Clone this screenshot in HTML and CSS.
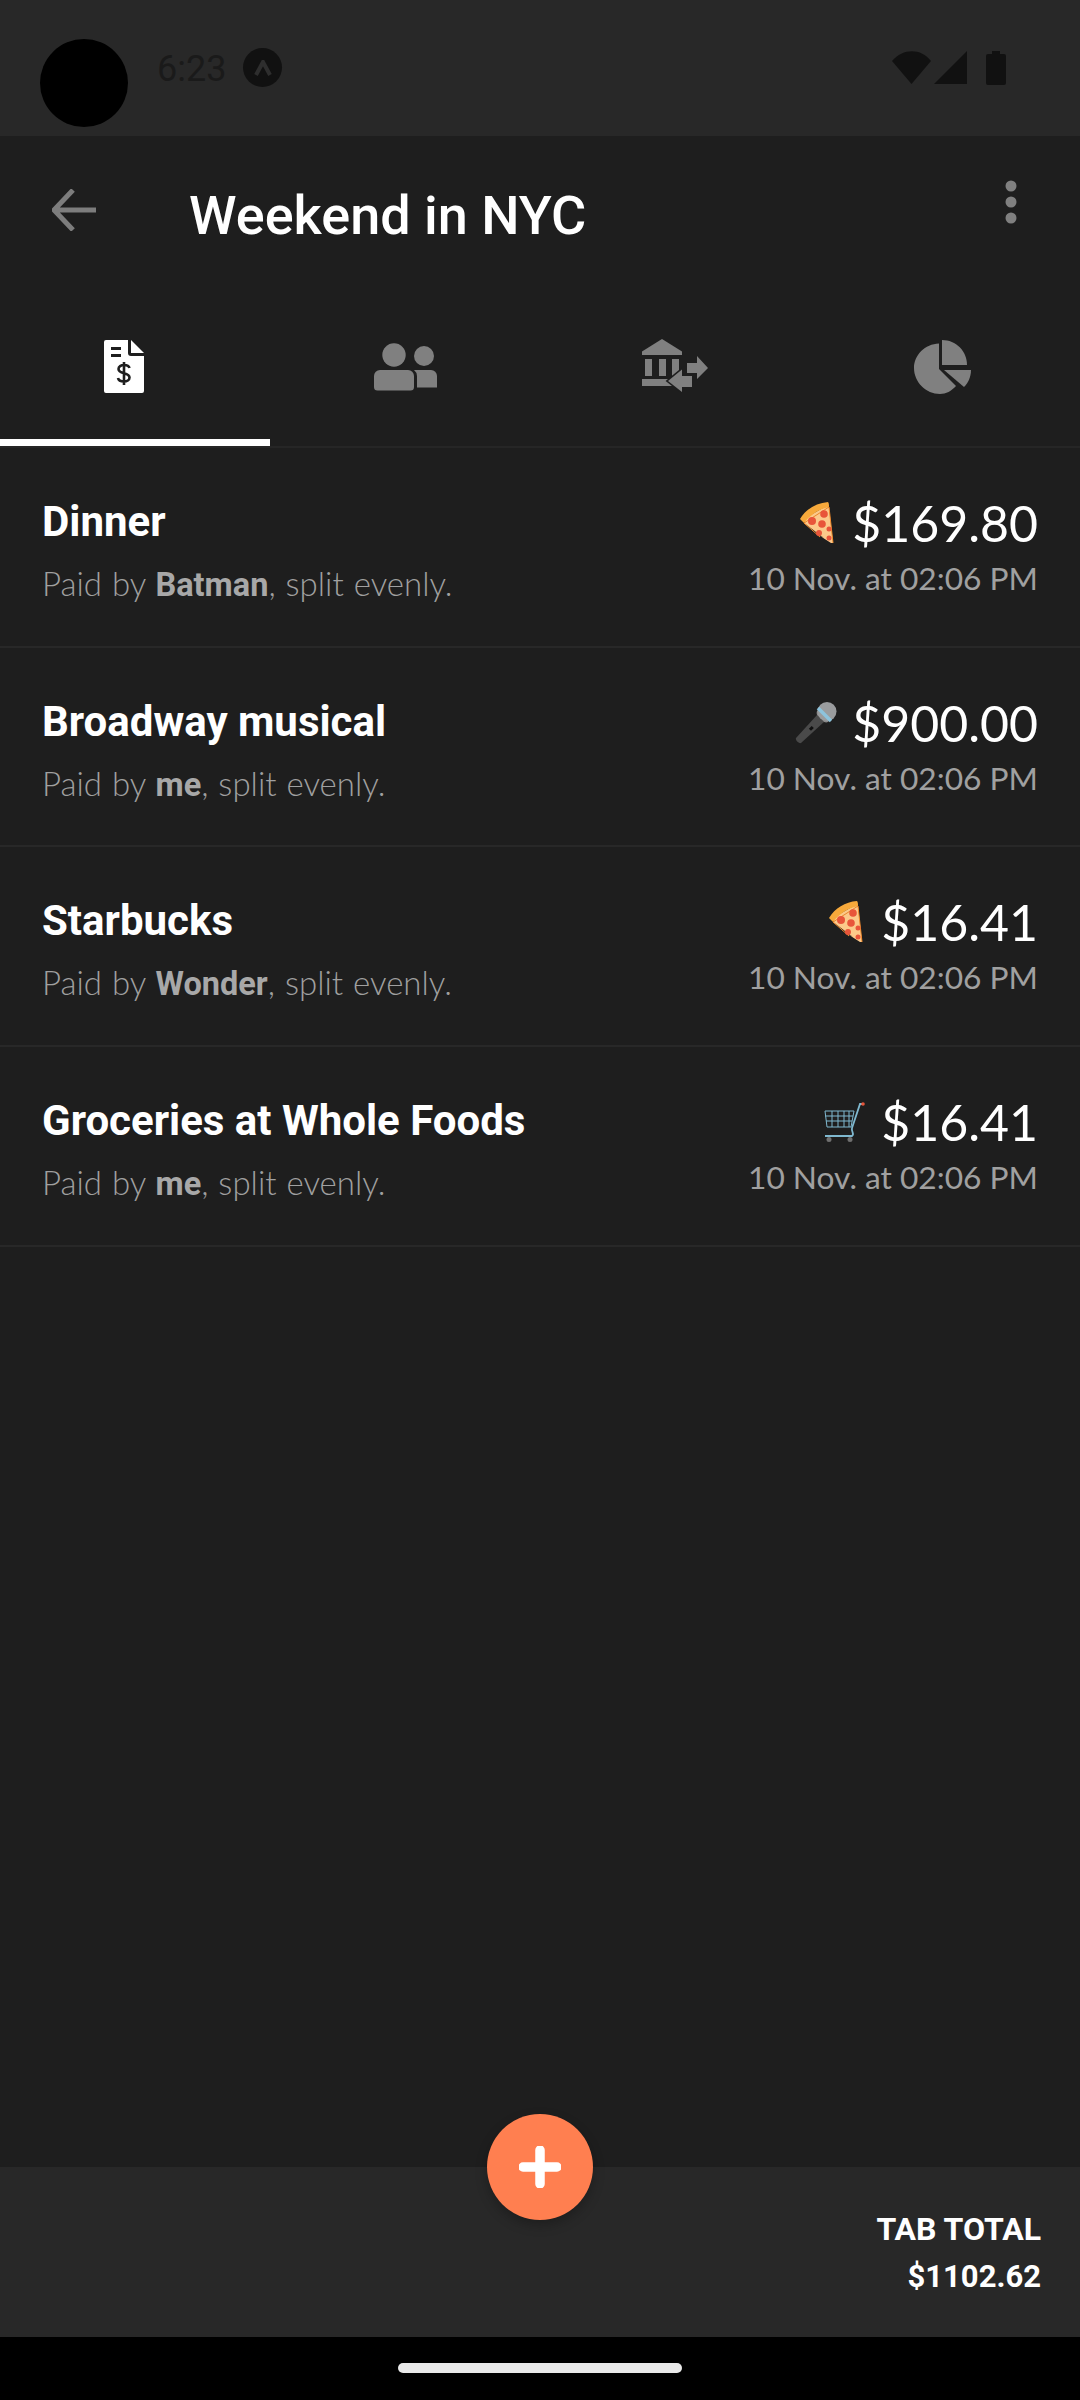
FILE: index.html
```html
<!DOCTYPE html>
<html lang="en">
<head>
    <meta charset="UTF-8">
    <meta name="viewport" content="width=device-width, initial-scale=1.0">
    <title>Weekend in NYC</title>
    <link rel="stylesheet" href="styles.css">
</head>
<body>
    <div class="app">
        <div class="camera"></div>

        <div class="status-bar">
            <span class="time">6:23</span>
            <span class="badge">
                <svg width="18" height="16" viewBox="0 0 18 16"><path d="M2 15 9 2l7 13" fill="none" stroke="#2e2e2e" stroke-width="4"/></svg>
            </span>
            <div class="status-icons">
                <svg width="40" height="33" viewBox="0 0 40 33"><path d="M0 10C11-3 29-3 39 10L19.500 33Z" fill="#111"/></svg>
                <svg class="signal" width="33" height="33" viewBox="0 0 33 33"><path d="M33 0V33H0Z" fill="#111"/></svg>
                <svg class="battery" width="20" height="34" viewBox="0 0 20 34"><path d="M6 0h8v3h4a2 2 0 0 1 2 2v27a2 2 0 0 1-2 2H2a2 2 0 0 1-2-2V5a2 2 0 0 1 2-2h4Z" fill="#111"/></svg>
            </div>
        </div>

        <header class="app-bar">
            <svg class="back" width="44" height="42" viewBox="0 0 44 42"><path d="M44 21H5M21 1 2 21l19 20" fill="none" stroke="#7d7d7d" stroke-width="5"/></svg>
            <h1 class="title">Weekend in NYC</h1>
            <svg class="more" width="12" height="44" viewBox="0 0 12 44"><circle cx="6" cy="6" r="5.500" fill="#808080"/><circle cx="6" cy="22" r="5.500" fill="#808080"/><circle cx="6" cy="38" r="5.500" fill="#808080"/></svg>
        </header>

        <nav class="tabs">
            <div class="tab active">
                <svg class="tab-receipt" width="40" height="53" viewBox="0 0 40 53">
                    <path d="M2 0h22v13a3 3 0 0 0 3 3h13v35a2 2 0 0 1-2 2H2a2 2 0 0 1-2-2V2a2 2 0 0 1 2-2Z" fill="#fff"/>
                    <path d="M27 0l13 13H27Z" fill="#fff"/>
                    <path d="M7 7h10v3H7ZM7 14h10v3H7Z" fill="#1e1e1e"/>
                    <path d="M25.500 28c-.5-2-2.500-3-5.500-3-3 0-5.500 1.500-5.500 4 0 5.500 11 3 11 8.500 0 2.500-2.500 4-5.500 4-3 0-5.500-1-6-3.500M20 22v23" fill="none" stroke="#1e1e1e" stroke-width="2.600"/>
                </svg>
            </div>
            <div class="tab tab-people">
                <svg width="63" height="48" viewBox="0 0 63 48">
                    <circle cx="20" cy="12" r="11.700" fill="#808080"/>
                    <circle cx="50" cy="13" r="10" fill="#808080"/>
                    <path d="M6 27h28a6 6 0 0 1 6 6v11a3.500 3.500 0 0 1-3.500 3.500h-33A3.500 3.500 0 0 1 0 44V33a6 6 0 0 1 6-6Z" fill="#808080"/>
                    <path d="M40 27h17a6 6 0 0 1 6 6v11.500H43V33a8 8 0 0 0-3-6Z" fill="#808080"/>
                </svg>
            </div>
            <div class="tab tab-bank">
                <svg width="66" height="53" viewBox="0 0 66 53">
                    <path d="M20 0 40 12.500V16H0v-3.500Z" fill="#808080"/>
                    <path d="M3 20h7v17H3ZM17 20h7v17h-7ZM30 20h7v17h-7Z" fill="#808080"/>
                    <path d="M0 40h30v7H0Z" fill="#808080"/>
                    <path d="M45 24h10V17l11 12-11 11v-6H45Z" fill="#808080"/>
                    <path d="M26 42 40 30.500V37h10v11H40v5Z" fill="#808080" stroke="#1e1e1e" stroke-width="3" paint-order="stroke"/>
                </svg>
            </div>
            <div class="tab tab-pie">
                <svg width="57" height="54" viewBox="0 0 57 54">
                    <path d="M25 3.500V29l17 17c-4.500 5-10 8-16 8C12 54 0 42 0 28 0 15 11 4 25 3.500Z" fill="#808080"/>
                    <path d="M28 0c14 0 25 11 25 25H28Z" fill="#808080"/>
                    <path d="M30 30h27c0 7-3 13-7 17Z" fill="#808080"/>
                </svg>
            </div>
        </nav>

        <main class="expenses">
            <div class="expense">
                <div class="expense-info">
                    <div class="expense-name">Dinner</div>
                    <div class="expense-desc">Paid by <b>Batman</b>, split evenly.</div>
                </div>
                <div class="expense-meta">
                    <div class="expense-amount">
                        <svg class="emoji" width="34" height="42" viewBox="0 0 34 42">
                            <path d="M2 18 28 3l5 38Z" fill="#fcc98a"/>
                            <path d="M0 17C6 7 16 1 28 0c1 1 1 3 1 5C19 7 10 13 4 21Z" fill="#f7a93b"/>
                            <path d="M4 21 29 5l4 36-2 0L17 32 24 36Z" fill="#fcc98a"/>
                            <path d="M4 21 29 5" stroke="#e8852a" stroke-width="1"/>
                            <path d="M4 21 20 35M33 41 29 5" stroke="#f08a2c" stroke-width="1"/>
                            <circle cx="24" cy="12" r="3.800" fill="#e8553a"/><circle cx="12" cy="19" r="4" fill="#e8553a"/><circle cx="22" cy="22" r="3.800" fill="#e8553a"/><circle cx="29" cy="27" r="2.500" fill="#e8553a"/><circle cx="19" cy="31" r="3" fill="#e8553a"/><circle cx="29" cy="36" r="2.500" fill="#e8553a"/>
                        </svg>
                        <span>$169.80</span>
                    </div>
                    <div class="expense-date">10 Nov. at 02:06 PM</div>
                </div>
            </div>

            <div class="expense">
                <div class="expense-info">
                    <div class="expense-name">Broadway musical</div>
                    <div class="expense-desc">Paid by <b>me</b>, split evenly.</div>
                </div>
                <div class="expense-meta">
                    <div class="expense-amount">
                        <svg class="emoji emoji-wide" width="42" height="42" viewBox="0 0 42 42">
                            <path d="M1 36 22 13l7 7L6 41c-2 1-6-3-5-5Z" fill="#4a4a4a"/>
                            <rect x="14" y="25" width="4" height="3" fill="#111" transform="rotate(-45 16 26)"/>
                            <path d="M22 13c-1-3 0-4 1-5l11 11c-1 1-2 2-5 1Z" fill="#8a8a8a"/>
                            <circle cx="32" cy="9.500" r="9.500" fill="#9a9c9e"/>
                            <path d="M23 6 36 19" stroke="#8dc3dc" stroke-width="3.500"/>
                        </svg>
                        <span>$900.00</span>
                    </div>
                    <div class="expense-date">10 Nov. at 02:06 PM</div>
                </div>
            </div>

            <div class="expense">
                <div class="expense-info">
                    <div class="expense-name">Starbucks</div>
                    <div class="expense-desc">Paid by <b>Wonder</b>, split evenly.</div>
                </div>
                <div class="expense-meta">
                    <div class="expense-amount">
                        <svg class="emoji" width="34" height="42" viewBox="0 0 34 42">
                            <path d="M2 18 28 3l5 38Z" fill="#fcc98a"/>
                            <path d="M0 17C6 7 16 1 28 0c1 1 1 3 1 5C19 7 10 13 4 21Z" fill="#f7a93b"/>
                            <path d="M4 21 29 5l4 36-2 0L17 32 24 36Z" fill="#fcc98a"/>
                            <path d="M4 21 29 5" stroke="#e8852a" stroke-width="1"/>
                            <path d="M4 21 20 35M33 41 29 5" stroke="#f08a2c" stroke-width="1"/>
                            <circle cx="24" cy="12" r="3.800" fill="#e8553a"/><circle cx="12" cy="19" r="4" fill="#e8553a"/><circle cx="22" cy="22" r="3.800" fill="#e8553a"/><circle cx="29" cy="27" r="2.500" fill="#e8553a"/><circle cx="19" cy="31" r="3" fill="#e8553a"/><circle cx="29" cy="36" r="2.500" fill="#e8553a"/>
                        </svg>
                        <span>$16.41</span>
                    </div>
                    <div class="expense-date">10 Nov. at 02:06 PM</div>
                </div>
            </div>

            <div class="expense">
                <div class="expense-info">
                    <div class="expense-name">Groceries at Whole Foods</div>
                    <div class="expense-desc">Paid by <b>me</b>, split evenly.</div>
                </div>
                <div class="expense-meta">
                    <div class="expense-amount">
                        <svg class="emoji emoji-wide" width="42" height="42" viewBox="0 0 42 42">
                            <g fill="none" stroke="#7fb8cf" stroke-width="1">
                                <path d="M1 10h29l-3 16H3ZM1 15h28M2 20h26M8 10v16M14 10v16M20 10v16M25 10v16"/>
                                <path d="M38 3h-2l-8 24c-1 4 3 6 0 8H1" stroke-width="1.800"/>
                            </g>
                            <circle cx="39" cy="3" r="1.800" fill="#e8553a"/>
                            <circle cx="5" cy="38.500" r="2.500" fill="#6f6f6f"/><circle cx="26" cy="38.500" r="2.500" fill="#6f6f6f"/>
                        </svg>
                        <span>$16.41</span>
                    </div>
                    <div class="expense-date">10 Nov. at 02:06 PM</div>
                </div>
            </div>
        </main>

        <footer class="total-bar">
            <button class="fab">
                <svg width="42" height="42" viewBox="0 0 42 42"><path d="M21 4v34M4 21h34" stroke="#fff" stroke-width="9.500" stroke-linecap="round"/></svg>
            </button>
            <div class="total-label">TAB TOTAL</div>
            <div class="total-value">$1102.62</div>
        </footer>

        <div class="nav-bar"><div class="home-pill"></div></div>
    </div>
</body>
</html>
```

FILE: styles.css
```css
* {
    margin: 0;
    padding: 0;
    box-sizing: border-box;
}

html, body {
    height: 100%;
    background: #1e1e1e;
    font-family: Roboto, Arial, sans-serif;
    overflow: hidden;
}

.app {
    position: relative;
    display: flex;
    flex-direction: column;
    width: 1080px;
    height: 2400px;
}

.camera {
    position: absolute;
    left: 40px;
    top: 39px;
    width: 88px;
    height: 88px;
    border-radius: 50%;
    background: #000;
}

.status-bar {
    display: flex;
    align-items: flex-start;
    flex-shrink: 0;
    height: 136px;
    padding: 48px 74px 0 157px;
    background: #282828;
}

.time {
    font-size: 36px;
    line-height: 42px;
    color: #1a1a1a;
}

.badge {
    display: flex;
    align-items: center;
    justify-content: center;
    width: 39px;
    height: 39px;
    margin-left: 17px;
    border-radius: 50%;
    background: #111;
}

.status-icons {
    display: flex;
    align-items: flex-start;
    margin-left: auto;
    padding-top: 3px;
}

.signal {
    margin-left: 2px;
}

.battery {
    margin-left: 19px;
}

.app-bar {
    display: flex;
    align-items: flex-start;
    flex-shrink: 0;
    height: 175px;
}

.back {
    margin: 53px 0 0 52px;
}

.title {
    margin: 51px 0 0 93px;
    font-size: 54px;
    line-height: 58px;
    font-weight: 500;
    color: #fff;
}

.more {
    margin: 44px 63px 0 auto;
}

.tabs {
    display: flex;
    flex-shrink: 0;
    height: 137px;
    border-bottom: 2px solid #262626;
}

.tab {
    display: flex;
    align-items: flex-start;
    justify-content: center;
    width: 270px;
    height: 135px;
    padding-top: 29px;
    border-bottom: 7px solid transparent;
}

.tab.active {
    border-bottom-color: #fff;
}

.tab-receipt {
    margin-right: 22px;
}

.tab-people {
    padding-top: 32px;
}

.tab-bank {
    padding-top: 28px;
}

.tab-pie {
    padding-right: 5px;
}

.expenses {
    flex: 1;
}

.expense {
    display: flex;
    justify-content: space-between;
    height: 199.700px;
    padding: 0 42px;
    border-bottom: 2px solid #282828;
}

.expense-info {
    padding-top: 50px;
}

.expense-name {
    font-size: 42px;
    line-height: 48px;
    font-weight: 700;
    color: #fff;
}

.expense-desc {
    margin-top: 18px;
    font-family: Lato, sans-serif;
    font-size: 33px;
    line-height: 38px;
    font-weight: 300;
    word-spacing: 1px;
    color: #a0a0a0;
}

.expense-desc b {
    font-family: Roboto, sans-serif;
    font-size: 32.500px;
    font-weight: 700;
    color: #a8a8a8;
}

.expense-meta {
    display: flex;
    flex-direction: column;
    align-items: flex-end;
    padding-top: 47px;
}

.expense-amount {
    display: flex;
    align-items: center;
    gap: 18px;
    font-family: Lato, sans-serif;
    font-size: 50px;
    line-height: 56px;
    font-weight: 400;
    color: #fff;
}

.emoji-wide {
    margin-right: -3px;
}

.expense-date {
    margin-top: 8px;
    font-family: Lato, sans-serif;
    font-size: 31.700px;
    line-height: 38px;
    font-weight: 400;
    color: #a0a0a0;
}

.total-bar {
    position: relative;
    flex-shrink: 0;
    height: 170px;
    padding: 44px 39px 0 0;
    background: #282828;
    text-align: right;
    color: #fff;
    font-size: 32px;
    font-weight: 700;
}

.total-label {
    line-height: 36px;
}

.total-value {
    margin-top: 12px;
    font-size: 31px;
    line-height: 36px;
}

.fab {
    position: absolute;
    left: 487px;
    top: -53px;
    display: flex;
    align-items: center;
    justify-content: center;
    width: 106px;
    height: 106px;
    border: none;
    border-radius: 50%;
    background: #ff7f50;
    box-shadow: 0 5px 12px rgba(0, 0, 0, 0.25);
}

.nav-bar {
    display: flex;
    justify-content: center;
    flex-shrink: 0;
    height: 63px;
    padding-top: 26px;
    background: #000;
}

.home-pill {
    width: 284px;
    height: 10px;
    border-radius: 5px;
    background: #eaeaea;
}
```
